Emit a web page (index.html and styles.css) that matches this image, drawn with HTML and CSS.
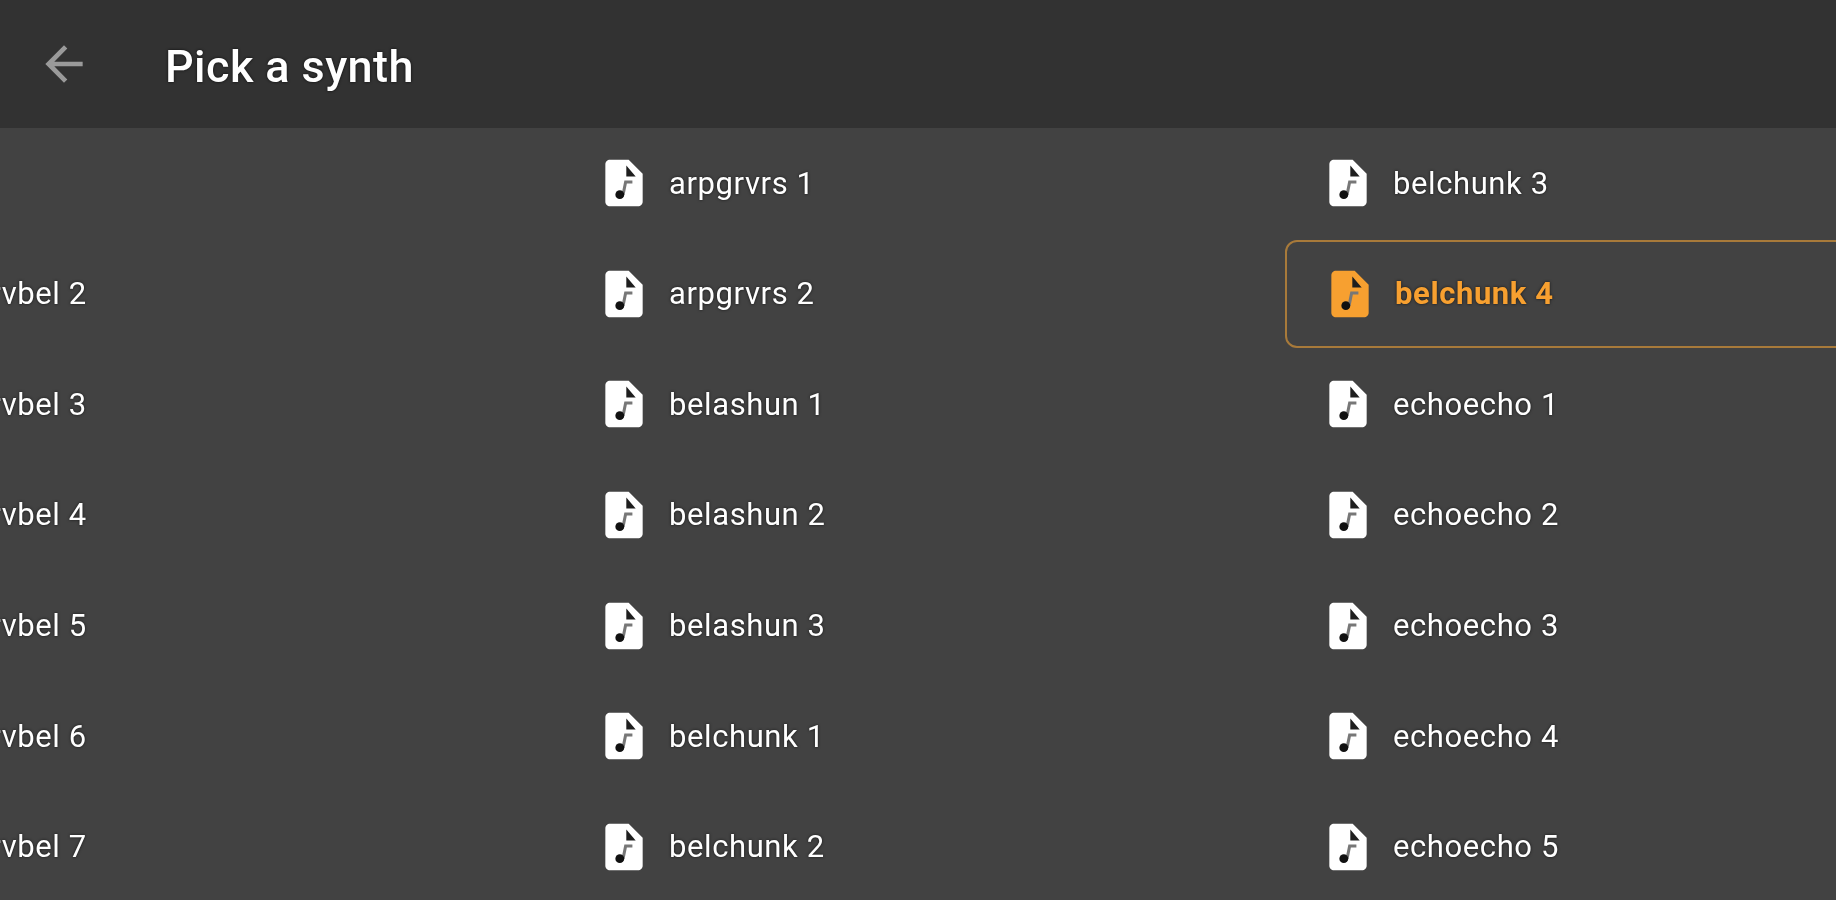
FILE: index.html
```html
<!DOCTYPE html>
<html lang="en">
<head>
    <meta charset="UTF-8">
    <meta name="viewport" content="width=device-width, initial-scale=1.0">
    <title>Pick a synth</title>
    <link rel="stylesheet" href="styles.css">
</head>
<body>
    <svg class="defs" width="0" height="0">
        <symbol id="audio-file" viewBox="0 0 24 24">
            <path d="M14 2H6c-1.1 0-1.99.9-1.99 2L4 20c0 1.1.89 2 1.99 2H18c1.1 0 2-.9 2-2V8l-6-6z"/>
            <path class="fold" d="M13 4.5L17 9.2H13z"/>
            <path class="stem" d="M11.6 17L12.7 11.6H15.6"/>
            <circle class="note" cx="10.2" cy="17" r="1.9"/>
        </symbol>
    </svg>
    <header class="toolbar">
        <svg class="back" viewBox="0 0 24 24"><path d="M20 11H7.83l5.59-5.59L12 4l-8 8 8 8 1.41-1.41L7.83 13H20v-2z"/></svg>
        <h1>Pick a synth</h1>
    </header>
    <main class="synths">
        <div class="item"></div>
        <div class="item"><svg class="icon"><use href="#audio-file"/></svg><span>arpgrvrs 1</span></div>
        <div class="item"><svg class="icon"><use href="#audio-file"/></svg><span>belchunk 3</span></div>

        <div class="item"><svg class="icon"><use href="#audio-file"/></svg><span>amrvbel 2</span></div>
        <div class="item"><svg class="icon"><use href="#audio-file"/></svg><span>arpgrvrs 2</span></div>
        <div class="item selected"><svg class="icon"><use href="#audio-file"/></svg><span>belchunk 4</span></div>

        <div class="item"><svg class="icon"><use href="#audio-file"/></svg><span>amrvbel 3</span></div>
        <div class="item"><svg class="icon"><use href="#audio-file"/></svg><span>belashun 1</span></div>
        <div class="item"><svg class="icon"><use href="#audio-file"/></svg><span>echoecho 1</span></div>

        <div class="item"><svg class="icon"><use href="#audio-file"/></svg><span>amrvbel 4</span></div>
        <div class="item"><svg class="icon"><use href="#audio-file"/></svg><span>belashun 2</span></div>
        <div class="item"><svg class="icon"><use href="#audio-file"/></svg><span>echoecho 2</span></div>

        <div class="item"><svg class="icon"><use href="#audio-file"/></svg><span>amrvbel 5</span></div>
        <div class="item"><svg class="icon"><use href="#audio-file"/></svg><span>belashun 3</span></div>
        <div class="item"><svg class="icon"><use href="#audio-file"/></svg><span>echoecho 3</span></div>

        <div class="item"><svg class="icon"><use href="#audio-file"/></svg><span>amrvbel 6</span></div>
        <div class="item"><svg class="icon"><use href="#audio-file"/></svg><span>belchunk 1</span></div>
        <div class="item"><svg class="icon"><use href="#audio-file"/></svg><span>echoecho 4</span></div>

        <div class="item"><svg class="icon"><use href="#audio-file"/></svg><span>amrvbel 7</span></div>
        <div class="item"><svg class="icon"><use href="#audio-file"/></svg><span>belchunk 2</span></div>
        <div class="item"><svg class="icon"><use href="#audio-file"/></svg><span>echoecho 5</span></div>
    </main>
</body>
</html>
```

FILE: styles.css
```css
html, body {
    height: 100%;
    margin: 0;
    overflow: hidden;
}
body {
    background-color: #424242;
    color: #fff;
    font-family: Roboto, "Liberation Sans", sans-serif;
}
.defs {
    display: block;
    height: 0;
}
.toolbar {
    display: flex;
    align-items: center;
    height: 128px;
    padding-left: 36px;
    background-color: #323232;
    filter: blur(0.7px);
}
.toolbar h1 {
    margin: 5px 0 0 73px;
    font-size: 45px;
    font-weight: 500;
    letter-spacing: 0.4px;
    text-shadow: 0 0 3px rgba(0, 0, 0, 0.8);
}
.back {
    width: 56px;
    height: 56px;
    fill: #9a9a9a;
}
.synths {
    display: grid;
    grid-template-columns: repeat(3, 722px);
    grid-auto-rows: 108px;
    column-gap: 2px;
    row-gap: 2.65px;
    margin-left: -163px;
    padding-top: 1px;
    filter: blur(0.7px);
}
.item {
    display: flex;
    align-items: center;
    gap: 17px;
    padding-left: 35px;
    font-size: 31px;
    letter-spacing: 0.6px;
    box-sizing: border-box;
    text-shadow: 0 0 3px rgba(0, 0, 0, 0.7);
}
.icon {
    width: 56px;
    height: 56px;
    fill: #fff;
}
.fold {
    fill: #1e1e1e;
}
.note {
    fill: #111;
}
.stem {
    fill: none;
    stroke: #777;
    stroke-width: 1.3;
}
.selected {
    border: 2px solid #a87a3a;
    border-radius: 12px;
    color: #f7a030;
    font-weight: 700;
}
.selected .icon {
    fill: #f7a030;
}
```
